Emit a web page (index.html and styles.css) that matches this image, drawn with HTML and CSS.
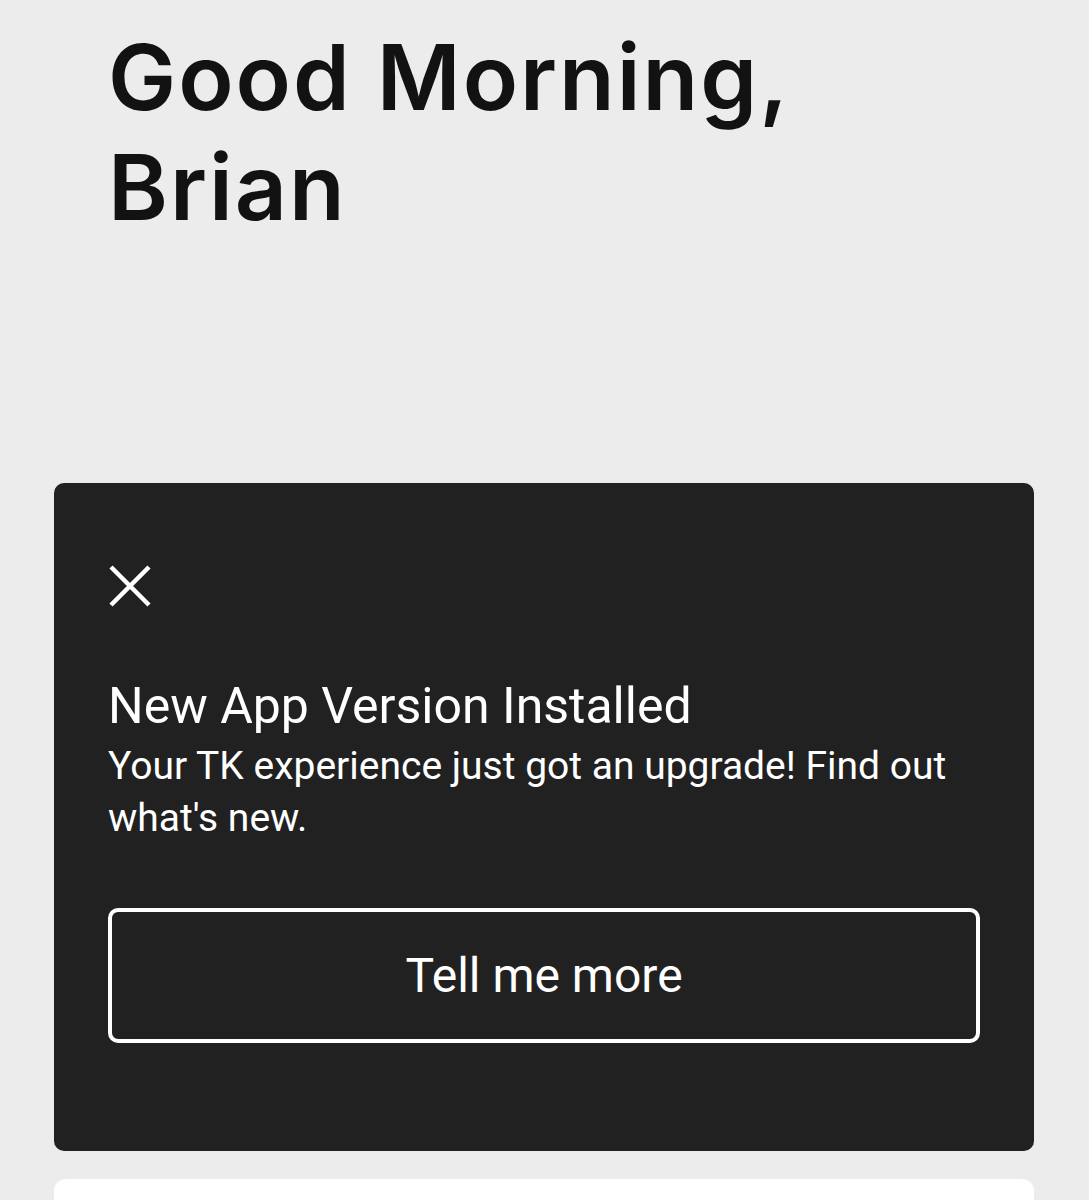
FILE: index.html
```html
<!DOCTYPE html>
<html lang="en">
<head>
    <meta charset="UTF-8">
    <meta name="viewport" content="width=device-width, initial-scale=1.0">
    <title>Home</title>
    <link rel="stylesheet" href="styles.css">
</head>
<body>
    <div class="page">
        <!-- greeting -->
        <h1 class="greeting">Good Morning,<br>Brian</h1>

        <!-- update notice card -->
        <div class="notice">
            <button class="close-btn" aria-label="Close">
                <svg width="44" height="44" viewBox="0 0 44 44">
                    <path d="M3 3 L41 41 M41 3 L3 41" stroke="#fff" stroke-width="4.5" fill="none"/>
                </svg>
            </button>
            <h2 class="notice-title">New App Version Installed</h2>
            <p class="notice-text">Your TK experience just got an upgrade! Find out what's new.</p>
            <button class="more-btn">Tell me more</button>
        </div>

        <div class="next-card"></div>
    </div>
</body>
</html>
```

FILE: styles.css
```css
body {
    margin: 0;
    background-color: #ececec;
    font-family: Inter, "Liberation Sans", sans-serif;
}
.page {
    padding: 0 55px 0 54px;
}
.greeting {
    margin: 0;
    padding: 22px 0 0 54px;
    font-size: 91px;
    line-height: 110px;
    font-weight: 600;
    color: #121212;
    letter-spacing: 2px;
}

/* dark notice card */
.notice {
    margin-top: 241px;
    background-color: #212121;
    border-radius: 10px;
    padding: 81px 54px 108px 54px;
    color: #fff;
    font-family: Roboto, "Liberation Sans", sans-serif;
}
.close-btn {
    display: block;
    padding: 0;
    border: none;
    background: none;
    width: 44px;
    height: 44px;
    cursor: pointer;
}
.close-btn svg {
    display: block;
}
.notice-title {
    margin: 70px 0 0 0;
    font-size: 50px;
    line-height: 56px;
    font-weight: 400;
}
.notice-text {
    margin: 6px 0 0 0;
    font-size: 39px;
    line-height: 52px;
    font-weight: 400;
}
.more-btn {
    display: block;
    width: 100%;
    height: 135px;
    margin-top: 64px;
    background: none;
    border: 4px solid #fff;
    border-radius: 10px;
    color: #fff;
    font-family: inherit;
    font-size: 48px;
    cursor: pointer;
}

.next-card {
    margin-top: 28px;
    height: 60px;
    background-color: #fff;
    border-radius: 12px 12px 0 0;
}
```
